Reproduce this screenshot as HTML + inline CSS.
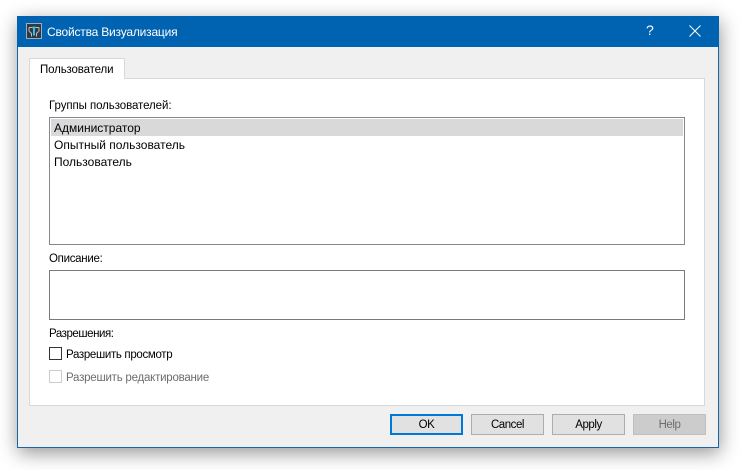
<!DOCTYPE html>
<html><head><meta charset="utf-8">
<style>
html,body{margin:0;padding:0;width:740px;height:470px;background:#fff;overflow:hidden;font-family:"Liberation Sans",sans-serif;font-size:12px;color:#000}
div,span{position:absolute;box-sizing:border-box}
span{white-space:nowrap;line-height:14px}
.n{font-size:11.5px}
.btn{top:414px;height:21px;width:73px;background:#e1e1e1;border:1px solid #adadad;text-align:center;line-height:21px;font-size:11.5px;letter-spacing:-.45px}
</style></head><body>
<div style="left:17px;top:16px;width:702px;height:432px;background:#f0f0f0;border:1px solid #1565a9;box-shadow:1px 5px 18px rgba(0,0,0,.42)"></div>
<div style="left:17px;top:16px;width:702px;height:31px;background:#0063b1"></div>
<svg style="position:absolute;left:26px;top:23px" width="16" height="16" viewBox="0 0 16 16"><rect x=".5" y=".5" width="15" height="15" fill="#2c3a48" stroke="#a3abb3"/><path d="M3 4.500h3M10 4.500h3M3 4.500v4M13 4.500v4M3.500 8.500l2 2v3M12.500 8.500l-2 2v3" fill="none" stroke="#b9c2c9"/><path d="M8 3.500v9" fill="none" stroke="#49b8d0" stroke-width="2"/><path d="M6 4.500h4" stroke="#49b8d0" stroke-width="1.500"/></svg>
<span style="left:47px;top:25px;color:#fff;letter-spacing:-.2px">Свойства Визуализация</span>
<span style="left:646px;top:23px;color:#fff;font-size:14px">?</span>
<svg style="position:absolute;left:689px;top:25px" width="12" height="12" viewBox="0 0 12 12"><path d="M.5.5l11 11M11.500.5l-11 11" stroke="#fff" stroke-width="1" fill="none"/></svg>

<div style="left:29px;top:78px;width:676px;height:328px;background:#fff;border:1px solid #d9d9d9"></div>
<div style="left:29px;top:58px;width:96px;height:21px;background:#fff;border:1px solid #d9d9d9;border-bottom:0"></div>
<span class="n" style="left:40px;top:63px;letter-spacing:-.14px">Пользователи</span>

<span class="n" style="left:49px;top:99px;letter-spacing:-.08px">Группы пользователей:</span>
<div style="left:49px;top:117px;width:636px;height:128px;border:1px solid #828790;background:#fff"></div>
<div style="left:51px;top:119px;width:632px;height:17px;background:#d9d9d9"></div>
<span style="left:54px;top:121px">Администратор</span>
<span style="left:54px;top:138px">Опытный пользователь</span>
<span style="left:54px;top:155px">Пользователь</span>

<span class="n" style="left:49px;top:252px;letter-spacing:-.29px">Описание:</span>
<div style="left:49px;top:270px;width:636px;height:50px;border:1px solid #7a7a7a;background:#fff"></div>

<span class="n" style="left:49px;top:327px;letter-spacing:-.45px">Разрешения:</span>
<div style="left:49px;top:347px;width:13px;height:13px;border:1px solid #333;background:#fff"></div>
<span class="n" style="left:66px;top:348px;letter-spacing:-.33px">Разрешить просмотр</span>
<div style="left:49px;top:370px;width:13px;height:13px;border:1px solid #ccc;background:#fff"></div>
<span class="n" style="left:66px;top:371px;color:#6d6d6d;letter-spacing:-.23px">Разрешить редактирование</span>

<div class="btn" style="left:390px;border:2px solid #0078d7;line-height:19px">OK</div>
<div class="btn" style="left:471px">Cancel</div>
<div class="btn" style="left:552px">Apply</div>
<div class="btn" style="left:633px;background:#ccc;border-color:#bfbfbf;color:#6d6d6d">Help</div>
</body></html>
